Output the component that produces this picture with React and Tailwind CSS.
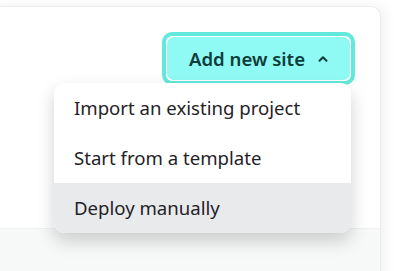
import { ChevronUp } from "lucide-react";

const items = ["Import an existing project", "Start from a template", "Deploy manually"];

export default function App() {
  return (
    <div className="w-[403px] h-[271px] overflow-hidden bg-white font-['Noto_Sans',sans-serif] pt-[6px]">
      <div className="relative -ml-[10px] w-[391px] h-[300px] bg-white border border-[#ececec] rounded-tr-[10px] shadow-[4px_0_14px_rgba(0,0,0,0.06)] flex flex-col">
        <div className="h-[221px] flex justify-end pr-[25px] pt-[25px]">
          <button className="h-[53px] w-[193px] rounded-[10px] border-[4px] border-[#62e9dc] bg-white p-px">
            <span className="h-full w-full rounded-[7px] bg-[#8ffaf3] flex items-center justify-center gap-[11px] pl-[2px] text-[18.6px] font-semibold text-[#0c3d3b]">
              Add new site
              <ChevronUp size={14} strokeWidth={3.5} />
            </span>
          </button>
        </div>
        <div className="flex-1 bg-[#f7f9f9] border-t border-[#f0f2f2]"></div>

        <div className="absolute left-[63px] top-[76px] w-[297px] rounded-[10px] bg-white shadow-[0_8px_18px_rgba(0,0,0,0.18)] overflow-hidden">
          {items.map((label, i) => (
            <div
              key={label}
              className={`h-[50px] flex items-center pl-[20px] text-[18.6px] text-[#1f2328] ${i === 2 ? "bg-[#e9eaec]" : ""}`}
            >
              {label}
            </div>
          ))}
        </div>
      </div>
    </div>
  );
}
